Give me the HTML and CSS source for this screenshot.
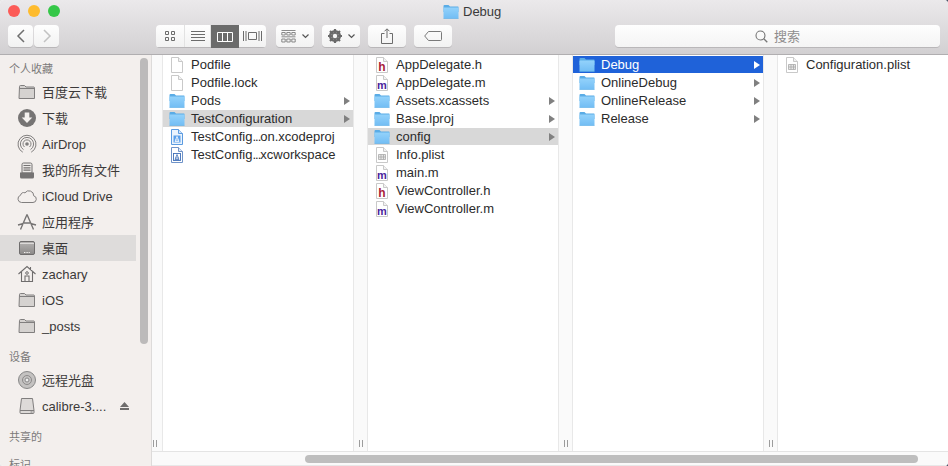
FILE: index.html
```html
<!DOCTYPE html>
<html lang="zh-CN">
<head>
    <meta charset="UTF-8">
    <meta name="viewport" content="width=device-width, initial-scale=1.0">
    <title>Debug</title>
    <link rel="stylesheet" href="styles.css">
</head>
<body>
    <svg class="defs" width="0" height="0">
        <defs>
            <linearGradient id="folderFill" x1="0" y1="0" x2="0" y2="1">
                <stop offset="0" stop-color="#93d2fb"/>
                <stop offset="1" stop-color="#72bdf4"/>
            </linearGradient>
            <linearGradient id="deskFill" x1="0" y1="0" x2="0" y2="1">
                <stop offset="0" stop-color="#b5b3b2"/>
                <stop offset="1" stop-color="#8b8988"/>
            </linearGradient>
            <symbol id="folder" viewBox="0 0 16 15">
                <path d="M.5 2a1 1 0 0 1 1-1h4l1.500 1.500h8a.5.5 0 0 1 .5.5v5H.5z" fill="#5aace6"/>
                <rect x=".5" y="3.500" width="15" height="11" rx=".6" fill="url(#folderFill)"/>
                <path d="M.5 14.500h15" stroke="#5aace6" stroke-width=".6"/>
            </symbol>
            <symbol id="doc" viewBox="0 0 12 16">
                <path d="M.5.5h7l4 4v11H.5z" fill="#fff" stroke="#c9c9c9"/>
                <path d="M7.500.5v4h4" fill="#f2f2f2" stroke="#c9c9c9"/>
            </symbol>
            <symbol id="plist" viewBox="0 0 12 16">
                <use href="#doc" width="12" height="16"/>
                <path d="M2.500 7.500h7v5h-7zM2.500 10h7M5 7.500v5M7.500 7.500v5" fill="#e6e6e6" stroke="#a9a9a9" stroke-width=".8"/>
            </symbol>
            <symbol id="hfile" viewBox="0 0 12 16">
                <use href="#doc" width="12" height="16"/>
                <text x="6" y="14" class="src-letter src-h">h</text>
            </symbol>
            <symbol id="mfile" viewBox="0 0 12 16">
                <use href="#doc" width="12" height="16"/>
                <text x="6" y="14" class="src-letter src-m">m</text>
            </symbol>
            <symbol id="xcodeproj" viewBox="0 0 12 16">
                <path d="M.5.5h7l4 4v11H.5z" fill="#eaf3fd" stroke="#5b9be0"/>
                <path d="M7.500.5v4h4" fill="#cfe2f8" stroke="#5b9be0"/>
                <rect x="2.500" y="6.500" width="7" height="7" fill="#5a9fea"/>
                <path d="M6 7.500l-2 5h4zM4.500 11h3" fill="none" stroke="#fff" stroke-width=".8"/>
            </symbol>
            <symbol id="xcworkspace" viewBox="0 0 12 16">
                <path d="M.5.5h7l4 4v11H.5z" fill="#fff" stroke="#6f93c8"/>
                <path d="M7.500.5v4h4" fill="#dfe8f5" stroke="#6f93c8"/>
                <rect x="2.500" y="6.500" width="7" height="7" fill="none" stroke="#3f6fb8" stroke-width=".9"/>
                <path d="M6 7.500l-2 5h4zM4.500 11h3" fill="none" stroke="#3f6fb8" stroke-width=".8"/>
            </symbol>
            <symbol id="sideFolder" viewBox="0 0 20 20">
                <path d="M2.500 4.500a1 1 0 0 1 1-1h4l1.500 1.500h8a.8.8 0 0 1 .5.8v10.700h-15.500z" fill="#d5d2d0" stroke="#807e7e"/>
                <path d="M2.500 6.500h15" stroke="#807e7e"/>
            </symbol>
        </defs>
    </svg>

    <div class="window">
        <header class="toolbar">
            <div class="titlebar">
                <div class="lights">
                    <span class="light light-close"></span>
                    <span class="light light-min"></span>
                    <span class="light light-max"></span>
                </div>
                <div class="title">
                    <svg class="title-icon"><use href="#folder"/></svg>
                    <span>Debug</span>
                </div>
            </div>
            <div class="tools">
                <div class="btn-group nav-group">
                    <button class="btn btn-nav" type="button">
                        <svg width="10" height="14" viewBox="0 0 10 14"><path d="M8 1L2 7l6 6" fill="none" stroke="#6f6f6f" stroke-width="1.500"/></svg>
                    </button>
                    <button class="btn btn-nav" type="button">
                        <svg width="10" height="14" viewBox="0 0 10 14"><path d="M2 1l6 6-6 6" fill="none" stroke="#c2c2c2" stroke-width="1.500"/></svg>
                    </button>
                </div>
                <div class="btn-group view-group">
                    <button class="view-btn view-icons" type="button">
                        <svg width="12" height="12" viewBox="0 0 12 12"><path d="M1.500 1.500h3v3h-3zM7.500 1.500h3v3h-3zM1.500 7.500h3v3h-3zM7.500 7.500h3v3h-3z" fill="none" stroke="#6c6c6c"/></svg>
                    </button>
                    <button class="view-btn view-list" type="button">
                        <svg width="16" height="12" viewBox="0 0 16 12"><path d="M1 .5h14M1 3.500h14M1 6.500h14M1 9.500h14" transform="translate(0 1)" fill="none" stroke="#6c6c6c"/></svg>
                    </button>
                    <button class="view-btn view-columns is-active" type="button">
                        <svg width="16" height="10" viewBox="0 0 16 10"><path d="M.5.500h15v9H.5zM5.500.500v9M10.500.500v9" fill="none" stroke="#fff"/></svg>
                    </button>
                    <button class="view-btn view-cover" type="button">
                        <svg width="19" height="12" viewBox="0 0 19 12"><path d="M5.500 2.500h8v7h-8zM.5 1v10M3 1v10M16 1v10M18.500 1v10" fill="none" stroke="#6c6c6c"/></svg>
                    </button>
                </div>
                <button class="btn btn-tool btn-arrange" type="button">
                    <svg width="15" height="13" viewBox="0 0 15 13"><path d="M.5.500h14M.8 2.500h3.400v2.500H.8zM5.800 2.500h3.400v2.500H5.800zM10.800 2.500h3.400v2.500h-3.400zM.5 6.800h14M.8 9h3.400v3H.8zM5.800 9h3.400v3H5.800zM10.800 9h3.400v3h-3.400z" fill="none" stroke="#707070" stroke-width=".8"/></svg>
                    <svg width="7" height="5" viewBox="0 0 7 5"><path d="M.5.500l3 3 3-3" fill="none" stroke="#555" stroke-width="1.200"/></svg>
                </button>
                <button class="btn btn-tool btn-gear" type="button">
                    <svg width="14" height="14" viewBox="0 0 14 14">
                        <circle cx="7" cy="7" r="4.800" fill="none" stroke="#6a6a6a" stroke-width="2.600"/>
                        <path d="M7 0v14M0 7h14M2 2l10 10M12 2L2 12" stroke="#6a6a6a" stroke-width="2.200"/>
                        <circle cx="7" cy="7" r="2.200" fill="#f6f6f6"/>
                    </svg>
                    <svg width="7" height="5" viewBox="0 0 7 5"><path d="M.5.500l3 3 3-3" fill="none" stroke="#555" stroke-width="1.200"/></svg>
                </button>
                <button class="btn btn-tool" type="button">
                    <svg width="12" height="16" viewBox="0 0 12 16"><path d="M3.500 5.500h-3v10h11v-10h-3M6 10V1M3.500 3.300L6 .8l2.500 2.500" fill="none" stroke="#6c6c6c"/></svg>
                </button>
                <button class="btn btn-tool" type="button">
                    <svg width="18" height="10" viewBox="0 0 18 10"><path d="M4.500.5h12a1 1 0 0 1 1 1v7a1 1 0 0 1-1 1h-12L.7 5z" fill="none" stroke="#7a7a7a"/></svg>
                </button>
                <div class="search">
                    <svg width="13" height="13" viewBox="0 0 13 13"><circle cx="5.500" cy="5.500" r="4.500" fill="none" stroke="#777" stroke-width="1.100"/><path d="M8.800 8.800l3.500 3.500" stroke="#777" stroke-width="1.300"/></svg>
                    <span class="search-text">搜索</span>
                </div>
            </div>
        </header>

        <div class="main">
            <aside class="sidebar">
                <div class="side-list">
                    <div class="side-head">个人收藏</div>
                    <div class="side-item">
                        <svg class="side-icon"><use href="#sideFolder"/></svg>
                        <span class="side-cjk">百度云下载</span>
                    </div>
                    <div class="side-item">
                        <svg class="side-icon" viewBox="0 0 20 20"><circle cx="10" cy="10" r="9" fill="#767474"/><path d="M7.700 4.500h4.600v5h3L10 15l-5.300-5.500h3z" fill="#f4f1ef"/></svg>
                        <span class="side-cjk">下载</span>
                    </div>
                    <div class="side-item">
                        <svg class="side-icon" viewBox="0 0 20 20">
                            <g fill="none" stroke="#807e7e">
                                <path d="M5.800 18.200a9 9 0 1 1 8.400 0"/>
                                <path d="M6.500 15.600a6.600 6.600 0 1 1 7 0"/>
                                <path d="M7.500 13a4 4 0 1 1 5 0"/>
                            </g>
                            <circle cx="10" cy="10" r="1.800" fill="#807e7e"/>
                        </svg>
                        <span>AirDrop</span>
                    </div>
                    <div class="side-item">
                        <svg class="side-icon" viewBox="0 0 20 20">
                            <path d="M5 13V4.500a1.500 1.500 0 0 1 1.500-1.500h7A1.500 1.500 0 0 1 15 4.500V13z" fill="#ece9e7" stroke="#757373"/>
                            <path d="M6.500 5.500h7M6.500 7.800h7M6.500 10.100h7" stroke="#757373" stroke-width="1.200"/>
                            <path d="M3 12.500h14v4.500a1.500 1.500 0 0 1-1.500 1.500h-11A1.500 1.500 0 0 1 3 17z" fill="#757373"/>
                        </svg>
                        <span class="side-cjk">我的所有文件</span>
                    </div>
                    <div class="side-item">
                        <svg class="side-icon" viewBox="0 0 20 20"><path d="M4.500 16.500a3.700 3.700 0 0 1-1-7.200A3.600 3.600 0 0 1 8 6.800 4.800 4.800 0 0 1 16.700 9.800 3.400 3.400 0 0 1 16 16.500z" fill="none" stroke="#807e7e"/></svg>
                        <span>iCloud Drive</span>
                    </div>
                    <div class="side-item">
                        <svg class="side-icon" viewBox="0 0 20 20"><path d="M10 2.500l6.500 15M10 2.500l-6.500 15M7 11h6M1 13l5.500-1.500M19 13l-5.500-1.500" fill="none" stroke="#767474" stroke-width="1.400"/></svg>
                        <span class="side-cjk">应用程序</span>
                    </div>
                    <div class="side-item is-current">
                        <svg class="side-icon" viewBox="0 0 20 20">
                            <rect x="2.500" y="3.500" width="15" height="13" rx="1.500" fill="url(#deskFill)" stroke="#6f6d6d"/>
                            <path d="M3 5.500h14" stroke="#dcdad9"/>
                            <path d="M7 14.500h6" stroke="#f4f2f0" stroke-width="1.200" stroke-dasharray="1 .6"/>
                        </svg>
                        <span class="side-cjk">桌面</span>
                    </div>
                    <div class="side-item">
                        <svg class="side-icon" viewBox="0 0 20 20"><path d="M1.500 10L10 2.500 18.500 10M4.500 8v9.500h11V8M13.500 3v3M8 17.500V12h4v5.500" fill="none" stroke="#6f6d6d" stroke-width="1.100"/><circle cx="10" cy="9" r="1.300" fill="none" stroke="#6f6d6d"/></svg>
                        <span>zachary</span>
                    </div>
                    <div class="side-item">
                        <svg class="side-icon"><use href="#sideFolder"/></svg>
                        <span>iOS</span>
                    </div>
                    <div class="side-item">
                        <svg class="side-icon"><use href="#sideFolder"/></svg>
                        <span>_posts</span>
                    </div>
                    <div class="side-head side-head-next">设备</div>
                    <div class="side-item">
                        <svg class="side-icon" viewBox="0 0 20 20"><circle cx="10" cy="10" r="8.500" fill="#c4c2c1" stroke="#888"/><circle cx="10" cy="10" r="4.500" fill="none" stroke="#8c8a8a"/><circle cx="10" cy="10" r="2" fill="#eee" stroke="#888"/></svg>
                        <span class="side-cjk">远程光盘</span>
                    </div>
                    <div class="side-item">
                        <svg class="side-icon" viewBox="0 0 20 20"><path d="M4.500 2.500h11L17 14.500v2a1 1 0 0 1-1 1H4a1 1 0 0 1-1-1v-2z" fill="#dddad8" stroke="#807e7e"/><path d="M3 14.500h14" stroke="#807e7e"/><path d="M13.500 16h2" stroke="#807e7e"/></svg>
                        <span class="side-label">calibre-3....</span>
                        <svg class="eject" width="9" height="8" viewBox="0 0 9 8"><path d="M4.500 0L9 5H0zM0 6h9v2H0z" fill="#6f6d6d"/></svg>
                    </div>
                    <div class="side-head side-head-next">共享的</div>
                    <div class="side-head side-head-next">标记</div>
                </div>
                <div class="side-scroll"></div>
            </aside>

            <div class="browser-wrap">
                <div class="browser">
                    <div class="gutter gutter-first"><span class="handle"></span></div>

                    <div class="col">
                        <div class="row"><svg class="doc-icon"><use href="#doc"/></svg><span class="name">Podfile</span></div>
                        <div class="row"><svg class="doc-icon"><use href="#doc"/></svg><span class="name">Podfile.lock</span></div>
                        <div class="row"><svg class="folder-icon"><use href="#folder"/></svg><span class="name">Pods</span><i class="arrow"></i></div>
                        <div class="row is-open"><svg class="folder-icon"><use href="#folder"/></svg><span class="name">TestConfiguration</span><i class="arrow"></i></div>
                        <div class="row"><svg class="doc-icon"><use href="#xcodeproj"/></svg><span class="name">TestConfig<span class="dots">...</span>on.xcodeproj</span></div>
                        <div class="row"><svg class="doc-icon"><use href="#xcworkspace"/></svg><span class="name">TestConfig<span class="dots">...</span>xcworkspace</span></div>
                    </div>
                    <div class="gutter"><span class="handle"></span></div>

                    <div class="col">
                        <div class="row"><svg class="doc-icon"><use href="#hfile"/></svg><span class="name">AppDelegate.h</span></div>
                        <div class="row"><svg class="doc-icon"><use href="#mfile"/></svg><span class="name">AppDelegate.m</span></div>
                        <div class="row"><svg class="folder-icon"><use href="#folder"/></svg><span class="name">Assets.xcassets</span><i class="arrow"></i></div>
                        <div class="row"><svg class="folder-icon"><use href="#folder"/></svg><span class="name">Base.lproj</span><i class="arrow"></i></div>
                        <div class="row is-open"><svg class="folder-icon"><use href="#folder"/></svg><span class="name">config</span><i class="arrow"></i></div>
                        <div class="row"><svg class="doc-icon"><use href="#plist"/></svg><span class="name">Info.plist</span></div>
                        <div class="row"><svg class="doc-icon"><use href="#mfile"/></svg><span class="name">main.m</span></div>
                        <div class="row"><svg class="doc-icon"><use href="#hfile"/></svg><span class="name">ViewController.h</span></div>
                        <div class="row"><svg class="doc-icon"><use href="#mfile"/></svg><span class="name">ViewController.m</span></div>
                    </div>
                    <div class="gutter"><span class="handle"></span></div>

                    <div class="col">
                        <div class="row is-selected"><svg class="folder-icon"><use href="#folder"/></svg><span class="name">Debug</span><i class="arrow"></i></div>
                        <div class="row"><svg class="folder-icon"><use href="#folder"/></svg><span class="name">OnlineDebug</span><i class="arrow"></i></div>
                        <div class="row"><svg class="folder-icon"><use href="#folder"/></svg><span class="name">OnlineRelease</span><i class="arrow"></i></div>
                        <div class="row"><svg class="folder-icon"><use href="#folder"/></svg><span class="name">Release</span><i class="arrow"></i></div>
                    </div>
                    <div class="gutter"><span class="handle"></span></div>

                    <div class="col col-last">
                        <div class="row"><svg class="doc-icon"><use href="#plist"/></svg><span class="name">Configuration.plist</span></div>
                    </div>
                </div>
                <div class="hbar"><div class="hbar-thumb"></div></div>
            </div>
        </div>
    </div>
</body>
</html>
```

FILE: styles.css
```css
html, body {
    margin: 0;
    padding: 0;
    height: 100%;
    overflow: hidden;
    background: linear-gradient(90deg, #e6e6e6 50%, #4a5568 50%);
}

body {
    font-family: "Liberation Sans", "Noto Sans CJK SC", sans-serif;
    font-size: 13px;
    color: #2b2b2b;
}

.defs {
    display: block;
    height: 0;
}

.window {
    display: flex;
    flex-direction: column;
    height: 466px;
    border-radius: 4px;
    overflow: hidden;
    background-color: #fff;
}

/* toolbar */
.toolbar {
    height: 54px;
    flex: none;
    background: linear-gradient(#ebe9eb, #d2d0d2);
    border-bottom: 1px solid #b0aeb0;
}

.titlebar {
    display: flex;
    height: 25px;
}

.lights {
    display: flex;
    gap: 8px;
    padding: 5px 0 0 8px;
}

.light {
    width: 12px;
    height: 12px;
    border-radius: 50%;
}

.light-close { background-color: #fc5b57; }
.light-min { background-color: #febb2d; }
.light-max { background-color: #35c748; }

.title {
    display: flex;
    align-items: center;
    gap: 4px;
    margin-left: 383px;
    height: 23px;
    color: #3a3a3a;
}

.title-icon {
    width: 16px;
    height: 15px;
}

.tools {
    display: flex;
    height: 23px;
    padding-left: 8px;
}

.btn-group {
    display: flex;
}

.btn, .view-btn {
    display: flex;
    align-items: center;
    justify-content: center;
    height: 22px;
    padding: 0;
    border: none;
    background: linear-gradient(#fefefe, #f2f2f2);
    box-shadow: 0 1px 0 #b9b7b9;
}

.btn {
    border-radius: 4px;
}

.nav-group {
    gap: 1px;
}

.btn-nav {
    width: 25px;
}

.view-group {
    margin-left: 97px;
    border-radius: 4px;
    overflow: hidden;
    height: 23px;
}

.view-btn {
    border-right: 1px solid #e2e2e2;
}

.view-icons { width: 29px; }
.view-list { width: 26px; }
.view-columns { width: 28px; }
.view-cover { width: 27px; border-right: none; }

.view-columns.is-active {
    background: #6b6b6b;
    height: 23px;
    border-right: none;
    box-shadow: none;
}

.btn-tool {
    width: 38px;
    margin-left: 8px;
    gap: 6px;
}

.btn-arrange {
    margin-left: 10px;
}

.search {
    display: flex;
    align-items: center;
    justify-content: center;
    gap: 6px;
    width: 325px;
    height: 22px;
    margin-left: 163px;
    border-radius: 4px;
    color: #8f8d8d;
    background: linear-gradient(#fefefe, #f4f4f4);
    box-shadow: 0 1px 0 #b9b7b9;
}

.search-text {
    padding-bottom: 2px;
}

/* main area */
.main {
    display: flex;
    flex: 1;
    min-height: 0;
}

.sidebar {
    display: flex;
    flex: none;
    width: 151px;
    overflow: hidden;
    background-color: #f3efed;
    border-right: 1px solid #dddbda;
    color: #3c3a3a;
}

.side-list {
    flex: none;
    width: 136px;
    padding-top: 5px;
}

.side-head {
    height: 19px;
    line-height: 19px;
    padding-left: 9px;
    font-size: 11px;
    color: #7c7a7a;
}

.side-head-next {
    margin-top: 9px;
}

.side-item {
    display: flex;
    align-items: center;
    gap: 5px;
    height: 26px;
    padding-left: 17px;
}

.side-item.is-current {
    background-color: #dedcdb;
}

.side-icon {
    flex: none;
    width: 20px;
    height: 20px;
}

/* the CJK fallback sits a pixel low against the latin rows */
.side-cjk {
    padding-bottom: 2px;
}

.side-label {
    flex: 1;
}

.eject {
    margin-right: 7px;
}

.side-scroll {
    flex: none;
    width: 8px;
    height: 286px;
    margin: 3px 0 0 4px;
    border-radius: 4px;
    background-color: #bcbaba;
}

.browser-wrap {
    display: flex;
    flex-direction: column;
    flex: 1;
    min-width: 0;
}

.browser {
    display: flex;
    flex: 1;
    min-height: 0;
}

.gutter {
    display: flex;
    flex: none;
    justify-content: center;
    align-items: flex-end;
    box-sizing: border-box;
    width: 15px;
    padding-bottom: 4px;
    background-color: #fafafa;
    border-left: 1px solid #e8e8e8;
    border-right: 1px solid #e8e8e8;
}

.gutter-first {
    width: 11px;
    border-left: none;
    justify-content: flex-start;
    padding-left: 1px;
}

.handle {
    width: 4px;
    height: 7px;
    border-left: 1px solid #9c9c9c;
    border-right: 1px solid #9c9c9c;
    box-sizing: border-box;
}

.col {
    flex: none;
    width: 190px;
    padding-top: 1px;
}

.col-last {
    flex: 1;
}

.row {
    display: flex;
    align-items: center;
    height: 17px;
    margin-bottom: 1px;
    padding-left: 6px;
}

.row.is-open {
    background-color: #d8d8d8;
}

.row.is-selected {
    background-color: #1f62d9;
    color: #fff;
}

.folder-icon {
    flex: none;
    width: 16px;
    height: 15px;
}

.doc-icon {
    flex: none;
    width: 12px;
    height: 16px;
    padding: 0 2px;
}

.name {
    flex: 1;
    margin-left: 6px;
    white-space: nowrap;
}

.dots {
    letter-spacing: -1px;
}

.arrow {
    flex: none;
    width: 0;
    height: 0;
    margin-right: 3px;
    border-style: solid;
    border-width: 4px 0 4px 6px;
    border-color: transparent transparent transparent #808080;
}

.is-selected .arrow {
    border-left-color: #fff;
}

.src-letter {
    font-family: "Liberation Sans", sans-serif;
    font-weight: bold;
    text-anchor: middle;
}

.src-h { fill: #a81c3a; font-size: 12px; }
.src-m { fill: #4a1f9c; font-size: 11px; }

.hbar {
    flex: none;
    box-sizing: border-box;
    height: 15px;
    padding: 3px 30px 2px 153px;
    background-color: #fafafa;
    border-top: 1px solid #e4e4e4;
    border-bottom: 1px solid #e8e8e8;
}

.hbar-thumb {
    height: 8px;
    border-radius: 4px;
    background-color: #bebebe;
}
```
